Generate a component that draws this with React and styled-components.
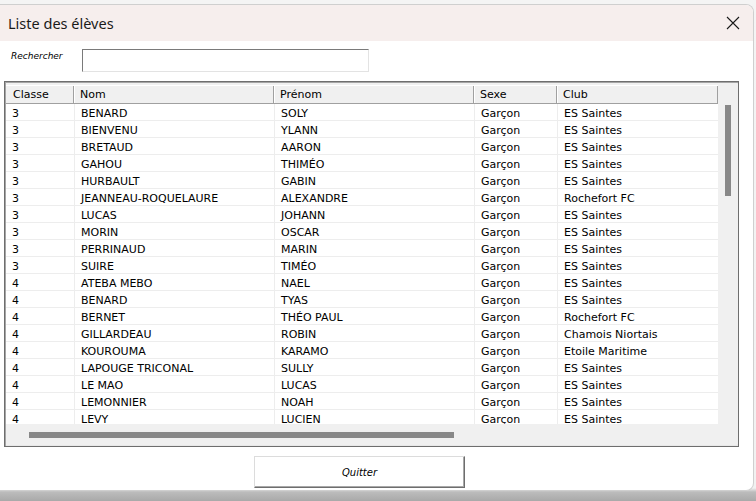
import React from "react";
import styled, { createGlobalStyle } from "styled-components";

const Global = createGlobalStyle`
  html, body { margin: 0; padding: 0; }
  body { background: #f3f3f3; overflow: hidden; }
  #root { width: 756px; height: 501px; }
`;

const Screen = styled.div`
  width: 756px;
  height: 501px;
  box-sizing: border-box;
  padding: 4px 2px 10px 0;
  display: flex;
  flex-direction: column;
  background: linear-gradient(to bottom, #f4f4f4 0, #f1f1f1 488px, #bcbcbc 492px, #a9a9a9 501px);
`;

const Window = styled.div`
  flex: 1;
  display: flex;
  flex-direction: column;
  background: #ffffff;
  border: 1px solid #cfcfcf;
  border-left: none;
  border-radius: 0 8px 8px 0;
  overflow: hidden;
  font-family: "DejaVu Sans", sans-serif;
`;

const TitleBar = styled.div`
  height: 36px;
  flex: none;
  display: flex;
  align-items: center;
  justify-content: space-between;
  padding: 0 12px 0 8px;
  background: #f6eeed;
`;

const Title = styled.span`
  font-family: "Noto Sans", "Open Sans", sans-serif;
  font-size: 14.5px;
  color: #1a1a1a;
  margin-top: -1px;
`;

const CloseButton = styled.span`
  width: 16px;
  height: 16px;
  display: flex;
  align-items: center;
  justify-content: center;
`;

const Body = styled.div`
  flex: 1;
  display: flex;
  flex-direction: column;
  padding: 8px 13px 3px 4px;
`;

const SearchRow = styled.div`
  display: flex;
  align-items: center;
  height: 23px;
`;

const SearchLabel = styled.label`
  width: 78px;
  padding-left: 7px;
  box-sizing: border-box;
  font-size: 9px;
  font-style: italic;
  color: #000;
  margin-top: -9px;
`;

const SearchInput = styled.input`
  width: 287px;
  height: 23px;
  box-sizing: border-box;
  border: 1px solid;
  border-color: #7a7a7a #e3e3e3 #e3e3e3 #7a7a7a;
  background: #fff;
  outline: none;
  padding: 0 3px;
  font-family: "DejaVu Sans", sans-serif;
  font-size: 11px;
`;

const ListFrame = styled.div`
  margin-top: 9px;
  width: 735px;
  height: 366px;
  box-sizing: border-box;
  border: 1px solid #6e6e6e;
  box-shadow: inset 1px 1px 0 #a5a5a5, inset -1px -1px 0 #e8e8e8;
  padding: 2px 1px 2px 1px;
  display: grid;
  grid-template-columns: 712px 20px;
  grid-template-rows: 1fr 20px;
  background: #f0f0f0;
`;

const Content = styled.div`
  overflow: hidden;
  background: #ffffff;
  margin-top: 1px;
`;

const COLS = "68px 200px 200px 83px 161px";

const HeaderRow = styled.div`
  display: grid;
  grid-template-columns: ${COLS};
  height: 19px;
  background: #f0f0f0;
  border-top: 1px solid #ffffff;
  border-bottom: 1px solid #a0a0a0;
  box-sizing: border-box;
`;

const HeaderCell = styled.div`
  font-size: 11px;
  line-height: 17px;
  padding-left: ${(p) => (p.$first ? "7px" : "5px")};
  border-left: ${(p) => (p.$first ? "none" : "1px solid #ffffff")};
  border-right: 1px solid #a0a0a0;
  color: #000;
  white-space: nowrap;
  overflow: hidden;
`;

const Row = styled.div`
  display: grid;
  grid-template-columns: ${COLS};
  height: 17px;
  box-sizing: border-box;
  border-bottom: 1px solid #ededed;
`;

const Cell = styled.div`
  font-size: 11px;
  line-height: 16px;
  padding-top: 2px;
  padding-left: 6px;
  border-left: ${(p) => (p.$first ? "none" : "1px solid #ededed")};
  color: #000;
  white-space: nowrap;
  overflow: hidden;
`;

const VScroll = styled.div`
  background: #f0f0f0;
  padding: 21px 0 0 7px;
`;

const VThumb = styled.div`
  width: 6px;
  height: 91px;
  background: #888888;
`;

const HScroll = styled.div`
  grid-column: 1 / span 2;
  background: #f0f0f0;
  padding: 8px 0 0 23px;
`;

const HThumb = styled.div`
  width: 425px;
  height: 6px;
  background: #888888;
`;

const Footer = styled.div`
  display: flex;
  justify-content: flex-start;
  padding: 9px 0 0 250px;
`;

const QuitButton = styled.button`
  width: 211px;
  height: 32px;
  box-sizing: border-box;
  background: #ffffff;
  border: 1px solid;
  border-color: #dcdcdc #6e6e6e #6e6e6e #dcdcdc;
  box-shadow: inset -1px -1px 0 #a8a8a8;
  font-family: "DejaVu Sans", sans-serif;
  font-size: 10px;
  font-style: italic;
  color: #000;
  padding: 0;
`;

const rows = [
  ["3", "BENARD", "SOLY", "Garçon", "ES Saintes"],
  ["3", "BIENVENU", "YLANN", "Garçon", "ES Saintes"],
  ["3", "BRETAUD", "AARON", "Garçon", "ES Saintes"],
  ["3", "GAHOU", "THIMÉO", "Garçon", "ES Saintes"],
  ["3", "HURBAULT", "GABIN", "Garçon", "ES Saintes"],
  ["3", "JEANNEAU-ROQUELAURE", "ALEXANDRE", "Garçon", "Rochefort FC"],
  ["3", "LUCAS", "JOHANN", "Garçon", "ES Saintes"],
  ["3", "MORIN", "OSCAR", "Garçon", "ES Saintes"],
  ["3", "PERRINAUD", "MARIN", "Garçon", "ES Saintes"],
  ["3", "SUIRE", "TIMÉO", "Garçon", "ES Saintes"],
  ["4", "ATEBA MEBO", "NAEL", "Garçon", "ES Saintes"],
  ["4", "BENARD", "TYAS", "Garçon", "ES Saintes"],
  ["4", "BERNET", "THÉO PAUL", "Garçon", "Rochefort FC"],
  ["4", "GILLARDEAU", "ROBIN", "Garçon", "Chamois Niortais"],
  ["4", "KOUROUMA", "KARAMO", "Garçon", "Etoile Maritime"],
  ["4", "LAPOUGE TRICONAL", "SULLY", "Garçon", "ES Saintes"],
  ["4", "LE MAO", "LUCAS", "Garçon", "ES Saintes"],
  ["4", "LEMONNIER", "NOAH", "Garçon", "ES Saintes"],
  ["4", "LEVY", "LUCIEN", "Garçon", "ES Saintes"],
];

const headers = ["Classe", "Nom", "Prénom", "Sexe", "Club"];

export default function App() {
  return (
    <>
      <Global />
      <Screen>
        <Window>
          <TitleBar>
            <Title>Liste des élèves</Title>
            <CloseButton>
              <svg width="14" height="14" viewBox="0 0 14 14">
                <path d="M1 1 L13 13 M13 1 L1 13" stroke="#1a1a1a" strokeWidth="1.1" fill="none" />
              </svg>
            </CloseButton>
          </TitleBar>
          <Body>
            <SearchRow>
              <SearchLabel>Rechercher</SearchLabel>
              <SearchInput />
            </SearchRow>
            <ListFrame>
              <Content>
                <HeaderRow>
                  {headers.map((h, i) => (
                    <HeaderCell key={h} $first={i === 0}>{h}</HeaderCell>
                  ))}
                </HeaderRow>
                {rows.map((r, ri) => (
                  <Row key={ri}>
                    {r.map((c, ci) => (
                      <Cell key={ci} $first={ci === 0}>{c}</Cell>
                    ))}
                  </Row>
                ))}
              </Content>
              <VScroll>
                <VThumb />
              </VScroll>
              <HScroll>
                <HThumb />
              </HScroll>
            </ListFrame>
            <Footer>
              <QuitButton>Quitter</QuitButton>
            </Footer>
          </Body>
        </Window>
      </Screen>
    </>
  );
}
